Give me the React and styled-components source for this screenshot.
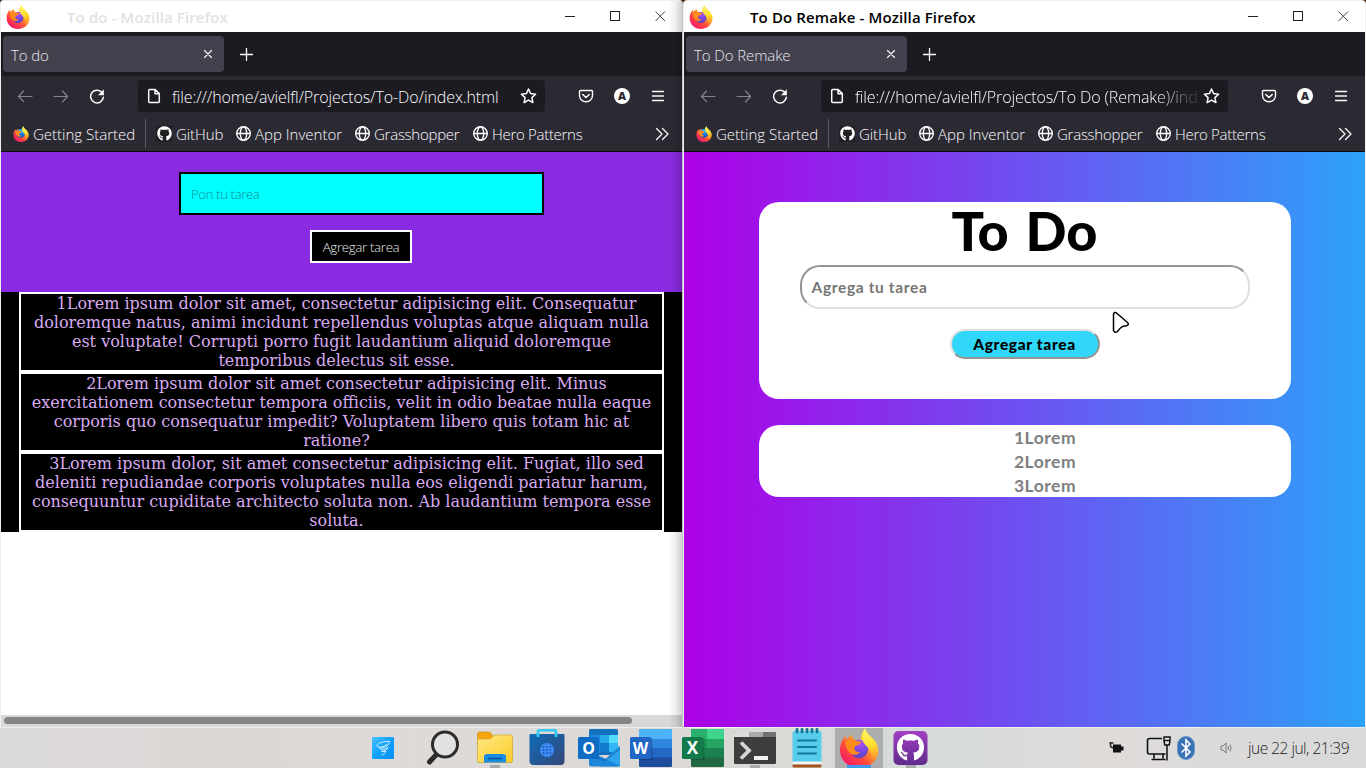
import React from "react";
import styled, { createGlobalStyle } from "styled-components";
import { FaGithub } from "react-icons/fa";

const UI = `"Open Sans", "Noto Sans", sans-serif`;

const GlobalStyle = createGlobalStyle`
  * { box-sizing: border-box; }
  html, body { margin: 0; padding: 0; }
  body { width: 1366px; height: 768px; overflow: hidden; background: #4a2a10; font-family: ${UI}; }
`;

const Desktop = styled.div`
  width: 1366px;
  height: 768px;
  display: grid;
  grid-template-rows: 728px 40px;
`;

const Windows = styled.div`
  display: grid;
  grid-template-columns: 683px 683px;
`;

const Window = styled.section`
  position: relative;
  display: flex;
  flex-direction: column;
  border: 1px solid #efefef;
  border-right-color: ${(p) => (p.$active ? "#efefef" : "#c4c4c6")};
  border-radius: 4px 4px 0 0;
  overflow: hidden;
  background: #fff;
`;

const EdgeShadow = styled.div`
  position: absolute;
  top: 0;
  right: 0;
  bottom: 0;
  width: 14px;
  pointer-events: none;
  background: linear-gradient(to right, rgba(0, 0, 0, 0), rgba(0, 0, 0, 0.06) 50%, rgba(0, 0, 0, 0.18));
`;

const TitleBar = styled.header`
  display: flex;
  align-items: center;
  height: 31px;
  flex: none;
  padding-left: 5px;
  background: #fff;
`;

const Label = styled.span`
  display: block;
  flex: none;
  white-space: pre;
  font-family: ${UI};
  font-size: ${(p) => p.$size || 15}px;
  font-weight: ${(p) => p.$weight || 300};
  letter-spacing: ${(p) => p.$track || 0}px;
  line-height: 20px;
  color: ${(p) => p.$color || "#fbfbfe"};
  width: ${(p) => (p.$width ? `${p.$width}px` : "auto")};
`;

const WindowTitle = styled(Label)`
  flex: 1;
  margin-left: 37px;
`;

const WindowButtons = styled.div`
  display: flex;
  align-items: center;
  width: 135px;
  height: 29px;
  flex: none;
`;

const WindowButton = styled.span`
  width: 45px;
  display: flex;
  padding-left: 18px;
`;

const TabStrip = styled.div`
  display: flex;
  align-items: center;
  height: 44px;
  flex: none;
  padding-left: 2px;
  background: #1c1b22;
`;

const Tab = styled.div`
  display: flex;
  align-items: center;
  justify-content: space-between;
  width: 221px;
  height: 36px;
  padding: 2px 11px 0 8px;
  border-radius: 4px;
  background: #42414d;
  svg { margin-top: -2px; }
`;

const NewTab = styled.span`
  display: flex;
  margin: 0 0 0 16px;
`;

const NavBar = styled.div`
  display: flex;
  align-items: center;
  height: 40px;
  flex: none;
  padding-left: 16px;
  background: #2b2a33;
`;

const NavButtons = styled.div`
  display: flex;
  gap: 20px;
  width: 121px;
`;

const UrlBar = styled.div`
  display: flex;
  align-items: center;
  width: 407px;
  height: 32px;
  padding-left: 8px;
  border-radius: 4px;
  background: #1c1b22;
`;

const UrlText = styled.div`
  width: 343px;
  margin: 1px 5px 0 10px;
  overflow: hidden;
  mask-image: ${(p) => (p.$fade ? "linear-gradient(to right, #000 300px, transparent 347px)" : "none")};
`;

const NavActions = styled.div`
  display: flex;
  gap: 20px;
  margin-left: 33px;
`;

const Avatar = styled.span`
  width: 16px;
  height: 16px;
  border-radius: 50%;
  background: #fff;
  color: #2b2a33;
  font: 800 11px/16px "Open Sans", sans-serif;
  text-align: center;
`;

const BookmarkBar = styled.div`
  display: flex;
  align-items: center;
  height: 36px;
  flex: none;
  padding: 0 13px 0 12px;
  background: #2b2a33;
  border-bottom: 1px solid #0c0c0d;
`;

const Bookmark = styled.span`
  display: flex;
  align-items: center;
  gap: 4px;
  svg { flex: none; }
`;

const BarDivider = styled.span`
  width: 1px;
  height: 29px;
  margin: -1px 10px 0 9px;
  background: #5b5a63;
`;

const GithubTile = styled.span`
  display: flex;
  align-items: center;
  justify-content: center;
  width: 16px;
  height: 16px;
  flex: none;
  color: #fff;
  background: #201f22;
`;

const Spacer = styled.span`
  flex: 1;
`;

const OldPage = styled.main`
  display: flex;
  flex-direction: column;
  flex: 1;
  background: #fff;
`;

const OldForm = styled.div`
  display: flex;
  flex-direction: column;
  align-items: center;
  height: 140px;
  padding: 20px 0 0 40px;
  background: #8a2be2;
`;

const OldInput = styled.div`
  width: 365px;
  height: 43px;
  padding: 10px;
  border: 2px solid #000;
  background: #00ffff;
`;

const OldButton = styled.div`
  display: flex;
  justify-content: center;
  width: 102px;
  height: 33px;
  margin: 15px 1px 0 0;
  padding-top: 5px;
  border: 2px solid #fff;
  background: #000;
`;

const OldList = styled.ul`
  margin: 0;
  padding: 0 18px;
  list-style: none;
  background: #000;
`;

const OldItem = styled.li`
  height: 80px;
  border: 2px solid #fff;
  text-align: center;
  white-space: nowrap;
  color: #d8abf1;
  font: 16px/19px "DejaVu Serif", serif;
`;

const OldText = styled.span`
  padding: 0 10px;
`;

const ScrollTrack = styled.div`
  height: 12px;
  margin-top: auto;
  padding: 2px 3px;
  background: #d8d8d8;
`;

const ScrollThumb = styled.div`
  width: 628px;
  height: 7px;
  border-radius: 4px;
  background: #868686;
`;

const NewPage = styled.main`
  display: flex;
  flex-direction: column;
  align-items: center;
  gap: 26px;
  flex: 1;
  padding-top: 50px;
  background: linear-gradient(to right, #ad00e6, #2da2fa);
`;

const Card = styled.section`
  display: flex;
  flex-direction: column;
  align-items: center;
  width: 532px;
  height: ${(p) => p.$height}px;
  border-radius: 20px;
  background: #fff;
`;

const TaskList = styled(Card)`
  padding: 1px 0 0 41px;
`;

const Display = styled.span`
  display: block;
  white-space: pre;
  font-family: Lato, sans-serif;
  font-weight: ${(p) => p.$weight || 900};
  font-size: ${(p) => p.$size}px;
  line-height: ${(p) => p.$line}px;
  letter-spacing: ${(p) => p.$track || 0}px;
  word-spacing: ${(p) => p.$word || 0}px;
  color: ${(p) => p.$color || "#000"};
`;

const NewInput = styled.div`
  width: 450px;
  height: 44px;
  margin-top: 5px;
  padding: 10px;
  border: 2px solid;
  border-color: #949494 #dfdfdf #dfdfdf #949494;
  border-radius: 20px;
`;

const NewButton = styled.div`
  display: flex;
  justify-content: center;
  width: 150px;
  height: 30px;
  margin-top: 20px;
  padding-top: 3px;
  border: 2px solid;
  border-color: #dfdfdf #949494 #949494 #dfdfdf;
  border-radius: 15px;
  background: #31d7f9;
`;

const Pointer = styled.svg`
  position: absolute;
  left: 427px;
  top: 309px;
`;

const Taskbar = styled.footer`
  display: flex;
  align-items: stretch;
  padding-left: 357px;
  background: linear-gradient(to right, #dcdad9, #dad7d5 18%, #dedad8 30%, #dcd8d5 50%, #d5dbd9 68%, #dfdcda 80%, #d9d9d9);
`;

const TaskSlot = styled.div`
  position: relative;
  display: flex;
  align-items: center;
  justify-content: center;
  width: 52px;
  flex: none;
  margin-right: ${(p) => p.$after || 0}px;
`;

const ActiveTile = styled.div`
  display: flex;
  align-items: flex-start;
  justify-content: center;
  width: 48px;
  height: 40px;
  background: #adadad;
`;

const Running = styled.span`
  position: absolute;
  bottom: 0;
  left: ${(p) => (p.$active ? 14 : 21)}px;
  width: ${(p) => (p.$active ? 24 : 10)}px;
  height: 3px;
  background: ${(p) => (p.$active ? "#3d9be9" : "#a9a9a9")};
`;

const Tray = styled.div`
  display: flex;
  align-items: center;
  margin-left: 172px;
`;

const TrayIcon = styled.span`
  display: flex;
  margin-right: ${(p) => p.$gap}px;
`;

function FirefoxLogo({ size, id, small }) {
  return (
    <svg width={size} height={size} viewBox="0 0 24 24">
      <defs>
        <linearGradient id={`${id}-body`} x1="0.85" y1="0.1" x2="0.2" y2="0.95">
          <stop offset="0" stopColor="#fff44f" />
          <stop offset="0.35" stopColor="#ffa52a" />
          <stop offset="0.65" stopColor="#ff4b3c" />
          <stop offset="1" stopColor="#f5156c" />
        </linearGradient>
        <linearGradient id={`${id}-flame`} x1="0.4" y1="0" x2="0.6" y2="1">
          <stop offset="0" stopColor="#fff261" />
          <stop offset="0.5" stopColor="#ffdd2e" />
          <stop offset="1" stopColor="#ff9a24" stopOpacity="0" />
        </linearGradient>
        <radialGradient id={`${id}-globe`} cx="0.6" cy="0.2" r="0.9">
          <stop offset="0" stopColor={small ? "#1ec8ff" : "#b050ee"} />
          <stop offset="0.5" stopColor={small ? "#1473e6" : "#7446e0"} />
          <stop offset="1" stopColor={small ? "#103f9c" : "#5b44b0"} />
        </radialGradient>
      </defs>
      <path
        fill={`url(#${id}-body)`}
        d="M.6 13C.6 9.4 2 6.7 4 4.5c-.1 1.100 .1 1.800.5 2.500C5.400 5.600 6.500 4.700 8 4.200c-.2 1.200.2 2.100 1 2.800l4 .3C13 4.500 13.700 2.200 15.700.3c.5 2.400 1.900 3.600 3.700 5.300 2.600 2.300 4 4.700 4 8C23.400 19.500 18.500 24 12 24S.6 19.200.6 13z"
      />
      <circle cx={small ? 11.5 : 12} cy={small ? 11 : 12.6} r={small ? 6.6 : 5.5} fill={`url(#${id}-globe)`} />
      <path
        fill="#ff8a1c"
        d="M3.800 8.500C5.500 6.300 8 6.200 9.400 7.200c1.200.9 2.400.7 3.600.9.2 1.500-1.800 2.200-3 2.800-1 .6-.9 1.300-.6 2 .5 1.300 1.900 1.800 3.300 1.600-1.500 1.900-4.600 2.100-6.300.3C4.800 13.100 3.700 11 3.800 8.500z"
      />
      <path
        fill={`url(#${id}-flame)`}
        d="M15.700.3c.5 2.400 1.900 3.600 3.700 5.300 2.600 2.300 4 4.700 4 8 0 3.300-1.800 6.300-4.200 8 1.300-4.600-.4-8.600-3-11.100C14 8.400 12.400 5.200 15.700.3z"
      />
    </svg>
  );
}

const line = (stroke, strokeWidth = 1.5) => ({
  fill: "none",
  stroke,
  strokeWidth,
  strokeLinecap: "round",
  strokeLinejoin: "round",
});

const Globe = () => (
  <svg width="15" height="15" viewBox="0 0 15 15">
    <g {...line("#fbfbfe", 1.4)}>
      <circle cx="7.5" cy="7.5" r="6.8" />
      <ellipse cx="7.5" cy="7.5" rx="3.2" ry="6.8" />
      <path d="M1 7.5h13" />
    </g>
  </svg>
);

const bookmarks = [
  ["App Inventor", 100, 0],
  ["Grasshopper", 99, -0.25],
  ["Hero Patterns", 92, -0.3],
];

function Browser({ id, title, tab, url, active, children }) {
  return (
    <Window $active={active}>
      <TitleBar>
        <FirefoxLogo size={24} id={`${id}-title`} />
        <WindowTitle $size={15} $weight={600} $track={0.12} $color={active ? "#000" : "#e2e2e2"}>
          {title}
        </WindowTitle>
        <WindowButtons>
          <WindowButton>
            <svg width="10" height="11"><path d="M0 5.500h10" stroke="#222" /></svg>
          </WindowButton>
          <WindowButton>
            <svg width="11" height="11"><rect x=".5" y=".5" width="9" height="9" fill="none" stroke="#222" /></svg>
          </WindowButton>
          <WindowButton>
            <svg width="11" height="11"><path d="M.5.5l9.500 9.500M10 .5L.5 10" stroke="#333" strokeWidth=".9" /></svg>
          </WindowButton>
        </WindowButtons>
      </TitleBar>
      <TabStrip>
        <Tab>
          <Label $track={-0.1} $color="#e9e9ee">{tab}</Label>
          <svg width="10" height="10"><path d="M1.500 1.500l7 7M8.500 1.500L1.500 8.500" {...line("#fbfbfe", 1.1)} /></svg>
        </Tab>
        <NewTab>
          <svg width="13" height="13"><path d="M6.500.5v12M.5 6.500h12" {...line("#fbfbfe", 1.3)} /></svg>
        </NewTab>
      </TabStrip>
      <NavBar>
        <NavButtons>
          <svg width="16" height="16"><path d="M15 8.500H1.500M6.500 3L1.500 8.500l5 5" {...line("#85848b", 1.2)} /></svg>
          <svg width="16" height="16"><path d="M1 8.500h13.500M9.500 3l5 5.500-5 5.500" {...line("#85848b", 1.2)} /></svg>
          <svg width="16" height="16">
            <path d="M13.500 5.200A6.400 6.400 0 1 0 14.400 9.200" {...line("#fbfbfe", 1.5)} />
            <path d="M14.800 1.300v5.900H9z" fill="#fbfbfe" />
          </svg>
        </NavButtons>
        <UrlBar>
          <svg width="16" height="16">
            <path d="M2.700 2.500q0-1 1-1h5.500l4.100 4.100v7.900q0 1-1 1H3.700q-1 0-1-1zM9 1.800v4h4" {...line("#fbfbfe", 1.5)} />
          </svg>
          <UrlText $fade={active}>
            <Label $size={16} $track={-0.1}>{url}</Label>
          </UrlText>
          <svg width="17" height="16" viewBox="0 0 17 16">
            <path d="M8.500 1l2.100 4.600 5 .6-3.700 3.400 1 5-4.400-2.500-4.400 2.500 1-5L1.400 6.200l5-.6z" {...line("#fbfbfe", 1.5)} />
          </svg>
        </UrlBar>
        <NavActions>
          <svg width="16" height="16">
            <path d="M2.500 2.500h11q1 0 1 1V7.500a6.500 6.200 0 0 1-13 0V3.500q0-1 1-1z" {...line("#fbfbfe", 1.4)} />
            <path d="M4.800 6.500L8 9.500l3.200-3" {...line("#fbfbfe", 1.6)} />
          </svg>
          <Avatar>A</Avatar>
          <svg width="16" height="16"><path d="M2.500 3.500h11M2.500 8h11M2.500 12.500h11" {...line("#fbfbfe", 1.3)} /></svg>
        </NavActions>
      </NavBar>
      <BookmarkBar>
        <Bookmark>
          <FirefoxLogo size={16} id={`${id}-mark`} small />
          <Label $width={103}>Getting Started</Label>
        </Bookmark>
        <BarDivider />
        <Bookmark>
          <GithubTile><FaGithub size={15} /></GithubTile>
          <Label $width={60} $track={-0.1}>GitHub</Label>
        </Bookmark>
        {bookmarks.map(([name, width, track]) => (
          <Bookmark key={name}>
            <Globe />
            <Label $width={width} $track={track}>{name}</Label>
          </Bookmark>
        ))}
        <Spacer />
        <svg width="14" height="14"><path d="M1.500 1.500L7 7l-5.500 5.500M7.500 1.500L13 7l-5.500 5.500" {...line("#fbfbfe", 1.3)} /></svg>
      </BookmarkBar>
      {children}
    </Window>
  );
}

const oldTasks = [
  [
    "1Lorem ipsum dolor sit amet, consectetur adipisicing elit. Consequatur",
    "doloremque natus, animi incidunt repellendus voluptas atque aliquam nulla",
    "est voluptate! Corrupti porro fugit laudantium aliquid doloremque",
    "temporibus delectus sit esse.",
  ],
  [
    "2Lorem ipsum dolor sit amet consectetur adipisicing elit. Minus",
    "exercitationem consectetur tempora officiis, velit in odio beatae nulla eaque",
    "corporis quo consequatur impedit? Voluptatem libero quis totam hic at",
    "ratione?",
  ],
  [
    "3Lorem ipsum dolor, sit amet consectetur adipisicing elit. Fugiat, illo sed",
    "deleniti repudiandae corporis voluptates nulla eos eligendi pariatur harum,",
    "consequuntur cupiditate architecto soluta non. Ab laudantium tempora esse",
    "soluta.",
  ],
];

function SnipIcon() {
  return (
    <svg width="22" height="22">
      <defs>
        <linearGradient id="snip" x1="0" y1="0" x2="1" y2="1">
          <stop offset="0" stopColor="#48c1ff" />
          <stop offset=".5" stopColor="#12a2fb" />
          <stop offset="1" stopColor="#078df8" />
        </linearGradient>
      </defs>
      <rect width="22" height="22" rx="1" fill="url(#snip)" />
      <g {...line("#d3eeff", 1)}>
        <path d="M17.500 4.500C12 4 5.500 6 5 8.800c-.2 2.800 8 1.200 10.500-1.800" />
        <path d="M17.500 4.500c.5 3-3.500 6-10 6.700 2 2 6.500 1 8.500-1-.5 3-4 4-6.500 3.900 1.500 1 3.500.5 4.500 0-.5 2-2 3.200-4 4" />
      </g>
    </svg>
  );
}

function SearchIcon() {
  return (
    <svg width="34" height="36">
      <circle cx="19" cy="14.500" r="12.500" fill="#e3e1e0" stroke="#2c2c2c" strokeWidth="3" />
      <path d="M10 25L3.500 32" stroke="#2c2c2c" strokeWidth="5" strokeLinecap="round" />
    </svg>
  );
}

function FolderIcon() {
  return (
    <svg width="36" height="34">
      <defs>
        <linearGradient id="folder" x1="0" y1="0" x2="1" y2="1">
          <stop offset="0" stopColor="#ffe884" />
          <stop offset="1" stopColor="#fdcd28" />
        </linearGradient>
      </defs>
      <path d="M.5 14V3q0-2 2-2h9q1.500 0 2.500 1.300L16 5v8z" fill="#f6a60c" stroke="#c98b16" strokeWidth=".6" />
      <path d="M.5 30V9q0-1 1-1H12q2 0 3-1.500l1-1.200Q17 4 19 4h15q1.500 0 1.500 1.500V30q0 1.500-1.500 1.500H2Q.5 31.500.5 30z" fill="url(#folder)" stroke="#c99a22" strokeWidth=".6" />
      <path d="M7 31.500V26q0-3 3-3h16q3 0 3 3v5.500z" fill="#168ce2" />
      <path d="M11 27.500h14" stroke="#0a4f93" strokeWidth="1.500" />
    </svg>
  );
}

function StoreIcon() {
  return (
    <svg width="36" height="38">
      <defs>
        <linearGradient id="store" x1="0" y1="0" x2="1" y2="1">
          <stop offset="0" stopColor="#0f6cb6" />
          <stop offset="1" stopColor="#35477a" />
        </linearGradient>
      </defs>
      <path d="M.5 6q0-1 1-1h33q1 0 1 1v26q0 4-4 4h-27q-4 0-4-4z" fill="url(#store)" />
      <path d="M9 8V3q0-2 2-2h14q2 0 2 2v5" fill="none" stroke="#35c8f4" strokeWidth="2.800" />
      <circle cx="18" cy="21" r="7" fill="#3d8bf5" />
      <g fill="#164fa8">
        {[17, 20.200, 23.400].map((y) => [13.800, 17.200, 20.600].map((x) => <rect key={`${x}${y}`} x={x} y={y} width="1.500" height="1.500" />))}
      </g>
    </svg>
  );
}

const Letter = ({ children, x, y, size = 16 }) => (
  <text x={x} y={y} fill="#fff" fontFamily="Open Sans, sans-serif" fontWeight="700" fontSize={size} textAnchor="middle">
    {children}
  </text>
);

function OutlookIcon() {
  return (
    <svg width="42" height="38">
      <rect x="11" y="0" width="29" height="26" rx="1.500" fill="#1272be" />
      <rect x="12" y="6" width="10" height="18" fill="#1b8ade" />
      <rect x="22" y="6" width="9" height="8" fill="#27a8ea" />
      <rect x="31" y="6" width="9" height="8" fill="#56dcff" />
      <rect x="22" y="14" width="9" height="9" fill="#127bcf" />
      <rect x="31" y="14" width="9" height="9" fill="#32b6f2" />
      <path d="M38.500 18.500L42 17v19q0 1.500-1.500 1.500H22z" fill="#2da4ec" />
      <path d="M11 22l31 14.500q-.5 1-1.500 1H13q-2 0-2-2z" fill="#1d86da" />
      <path d="M11 24l15 6.500L42 18v3L26 33l-15-7z" fill="#0f5fae" opacity=".45" />
      <rect x="0" y="8" width="21" height="22" rx="1.500" fill="#0e6cc4" />
      <Letter x="10.500" y="25">O</Letter>
    </svg>
  );
}

function OfficeIcon({ bands, tab, letter, split }) {
  return (
    <svg width="42" height="38">
      <rect x="9" y="0" width="33" height="38" rx="1.500" fill={bands[3]} />
      <path d="M9 10V1.500Q9 0 10.500 0h30Q42 0 42 1.500V10z" fill={bands[0]} />
      <rect x="9" y="10" width="33" height="9.500" fill={bands[1]} />
      <rect x="9" y="19" width="33" height="9.500" fill={bands[2]} />
      {split && <path d="M9 0h16v28H9z" fill="#138a50" opacity=".5" />}
      <path d="M9 9h13.500v22H9z" fill="#000" opacity=".18" />
      <rect x="0" y="8" width="21" height="22" rx="1.500" fill={tab} />
      <Letter x="10.500" y="25" size={letter === "W" ? 16 : 17}>{letter}</Letter>
    </svg>
  );
}

function TerminalIcon() {
  return (
    <svg width="42" height="34">
      <rect x="0" y="1" width="42" height="32" rx="1.500" fill="#3d3d3d" />
      <path d="M0 6V2.500Q0 1 1.500 1H15v5z" fill="#dcdcdc" />
      <rect x="15" y="1" width="14" height="5" fill="#a9a9a9" />
      <path d="M29 1h11.500Q42 1 42 2.500V6H29z" fill="#717171" />
      <path d="M7 11.500l8 8-8 8" fill="none" stroke="#d5d5d5" strokeWidth="3.800" />
      <rect x="20" y="25" width="14" height="4" fill="#f2f2f2" />
    </svg>
  );
}

function NotepadIcon() {
  return (
    <svg width="30" height="40">
      <path d="M.5 5q0-2 2-2h25q2 0 2 2v30H.5z" fill="#58cdeb" />
      <rect x=".5" y="33.500" width="29" height="3" fill="#f4f4f4" />
      <path d="M.5 36.500h29V38q0 1.500-1.500 1.500H2q-1.500 0-1.500-1.500z" fill="#a5521d" />
      <path d="M5 1.500v2.500M10 1.500v2.500M15 1.500v2.500M20 1.500v2.500M25 1.500v2.500" stroke="#157596" strokeWidth="2.800" strokeLinecap="round" />
      <path d="M6 12.500h18M6 19h18M6 25.500h18" stroke="#117a9d" strokeWidth="2" strokeLinecap="round" />
    </svg>
  );
}

function GithubDesktopIcon() {
  return (
    <svg width="36" height="36">
      <defs>
        <linearGradient id="ghd" x1="0" y1="0" x2="0" y2="1">
          <stop offset="0" stopColor="#a33fc4" />
          <stop offset="1" stopColor="#5f2b8c" />
        </linearGradient>
      </defs>
      <rect x=".5" y="1" width="34" height="34" rx="5" fill="url(#ghd)" />
      <FaGithub x="3.500" y="3.500" size={28} color="#fff" />
    </svg>
  );
}

const wordBands = ["#4db4fb", "#2f86e0", "#2468c6", "#1c4c9c"];
const excelBands = ["#3fd58d", "#24a562", "#1c8050", "#1f6a43"];

export default function App() {
  return (
    <>
      <GlobalStyle />
      <Desktop>
        <Windows>
          <Browser id="old" title="To do - Mozilla Firefox" tab="To do" url="file:///home/avielfl/Projectos/To-Do/index.html">
            <OldPage>
              <OldForm>
                <OldInput>
                  <Label $size={13} $track={-0.3} $color="#0a8d93">Pon tu tarea</Label>
                </OldInput>
                <OldButton>
                  <Label $size={13.300} $track={-0.33} $color="#e8e8e8">Agregar tarea</Label>
                </OldButton>
              </OldForm>
              <OldList>
                {oldTasks.map((rows) => (
                  <OldItem key={rows[0]}>
                    <OldText>
                      {rows.map((row, i) => (
                        <React.Fragment key={row}>
                          {i > 0 && <br />}
                          {row}
                        </React.Fragment>
                      ))}
                    </OldText>
                  </OldItem>
                ))}
              </OldList>
              <ScrollTrack>
                <ScrollThumb />
              </ScrollTrack>
            </OldPage>
            <EdgeShadow />
          </Browser>
          <Browser id="new" active title="To Do Remake - Mozilla Firefox" tab="To Do Remake" url="file:///home/avielfl/Projectos/To Do (Remake)/index.html">
            <NewPage>
              <Card $height={197}>
                <Display $size={54} $line={58} $word={4}>To Do</Display>
                <NewInput>
                  <Display $size={15.500} $line={20} $track={0.65} $weight={700} $color="#757575">Agrega tu tarea</Display>
                </NewInput>
                <NewButton>
                  <Display $size={15.500} $line={20} $track={0.65}>Agregar tarea</Display>
                </NewButton>
              </Card>
              <TaskList $height={72}>
                {["1Lorem", "2Lorem", "3Lorem"].map((task) => (
                  <Display key={task} $size={17.500} $line={24} $track={0.5} $weight={700} $color="#808080">{task}</Display>
                ))}
              </TaskList>
            </NewPage>
            <Pointer width="20" height="26">
              <path d="M2.500 4.200Q3.200 1.500 5.500 3l11 9.500q2 2.200-1 3.300-3.500.2-5.500 1.700-2 1.800-3.500 4-2.600 1.800-4-.8z" fill="#fff" stroke="#000" strokeWidth="1.500" strokeLinejoin="round" />
            </Pointer>
          </Browser>
        </Windows>
        <Taskbar>
          <TaskSlot $after={8}><SnipIcon /></TaskSlot>
          <TaskSlot><SearchIcon /></TaskSlot>
          <TaskSlot><FolderIcon /><Running /></TaskSlot>
          <TaskSlot><StoreIcon /></TaskSlot>
          <TaskSlot><OutlookIcon /></TaskSlot>
          <TaskSlot><OfficeIcon bands={wordBands} tab="#2166c4" letter="W" /></TaskSlot>
          <TaskSlot><OfficeIcon bands={excelBands} tab="#12794a" letter="X" split /></TaskSlot>
          <TaskSlot><TerminalIcon /><Running /></TaskSlot>
          <TaskSlot><NotepadIcon /></TaskSlot>
          <TaskSlot>
            <ActiveTile><FirefoxLogo size={40} id="task" /></ActiveTile>
            <Running $active />
          </TaskSlot>
          <TaskSlot><GithubDesktopIcon /><Running /></TaskSlot>
          <Tray>
            <TrayIcon $gap={22}>
              <svg width="15" height="14">
                <path d="M4 3.500h8v2h2.500v4H12v2H4z" fill="#111" />
                <path d="M1.500 1v4.500M.5 2h4M1.500 5.500L4 7" stroke="#222" fill="none" strokeWidth="1.500" />
              </svg>
            </TrayIcon>
            <TrayIcon $gap={6}>
              <svg width="25" height="25">
                <path d="M16 2.500H3.500q-2 0-2 2V16q0 2 2 2h16M8 18.500v4M17 18.500v4M5.500 23.500h14" fill="none" stroke="#111" strokeWidth="1.600" />
                <path d="M18 1h6v4l-.8 4h-4.400L18 5zM18 4.500h6M21 9v15.500" fill="#e6e3e1" stroke="#111" strokeWidth="1.500" />
              </svg>
            </TrayIcon>
            <TrayIcon $gap={25}>
              <svg width="18" height="24">
                <rect x=".5" y=".5" width="17" height="23" rx="8.500" fill="#3772b4" stroke="#6a98c9" />
                <path d="M4.500 7.500l8.500 8.500-4 4V4l4 4-8.500 8.500" fill="none" stroke="#fff" strokeWidth="1.600" />
              </svg>
            </TrayIcon>
            <TrayIcon $gap={15}>
              <svg width="13" height="12">
                <path d="M1 4h2l3-3v10L3 8H1zM8 4q1.200 2 0 4M10 2.500q2 3.500 0 7" fill="none" stroke="#777" strokeWidth="1" />
              </svg>
            </TrayIcon>
            <Label $size={15.500} $color="#1c1c1c" $track={-0.5}>jue 22 jul, 21:39</Label>
          </Tray>
        </Taskbar>
      </Desktop>
    </>
  );
}
